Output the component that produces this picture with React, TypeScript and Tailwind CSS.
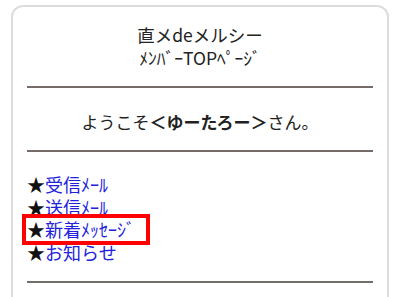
import type { ReactNode } from 'react';

const links = ['受信ﾒｰﾙ', '送信ﾒｰﾙ', '新着ﾒｯｾｰｼﾞ', 'お知らせ'];

const Rule = () => <div className="h-[2px] bg-[#756c69]" />;

const LinkRow = ({ children, marked }: { children: ReactNode; marked?: boolean }) => (
  <div className="relative h-[22.5px] leading-[22.5px]">
    <span className="text-[#111]">★</span>
    <a href="#" className="text-[#2222dd]">
      {children}
    </a>
    {marked && (
      <span className="pointer-events-none absolute -left-[5px] -top-[4px] h-[31px] w-[128px] border-4 border-[#ff0000]" />
    )}
  </div>
);

export default function App() {
  return (
    <div
      className="h-[297px] w-[400px] overflow-hidden bg-white px-[11px] pt-[5px] text-[#222]"
      style={{ fontFamily: '"Noto Sans CJK JP", "Noto Sans", sans-serif' }}
    >
      <div className="h-[320px] rounded-[12px] border-2 border-[#dcdcdc] px-[14px] pt-[16px]">
        <header className="text-center text-[17.5px] leading-[23px]">
          <div>直メdeメルシー</div>
          <div>ﾒﾝﾊﾞｰTOPﾍﾟｰｼﾞ</div>
        </header>

        <div className="mt-[17px]">
          <Rule />
        </div>

        <p className="mt-[22px] text-center text-[17px] leading-[24px]">
          ようこそ<b className="font-bold">＜ゆーたろー＞</b>さん。
        </p>

        <div className="mt-[16px]">
          <Rule />
        </div>

        <nav className="mt-[21px] text-[18px]">
          {links.map((label, i) => (
            <LinkRow key={label} marked={i === 2}>
              {label}
            </LinkRow>
          ))}
        </nav>

        <div className="mt-[18px]">
          <Rule />
        </div>
      </div>
    </div>
  );
}
